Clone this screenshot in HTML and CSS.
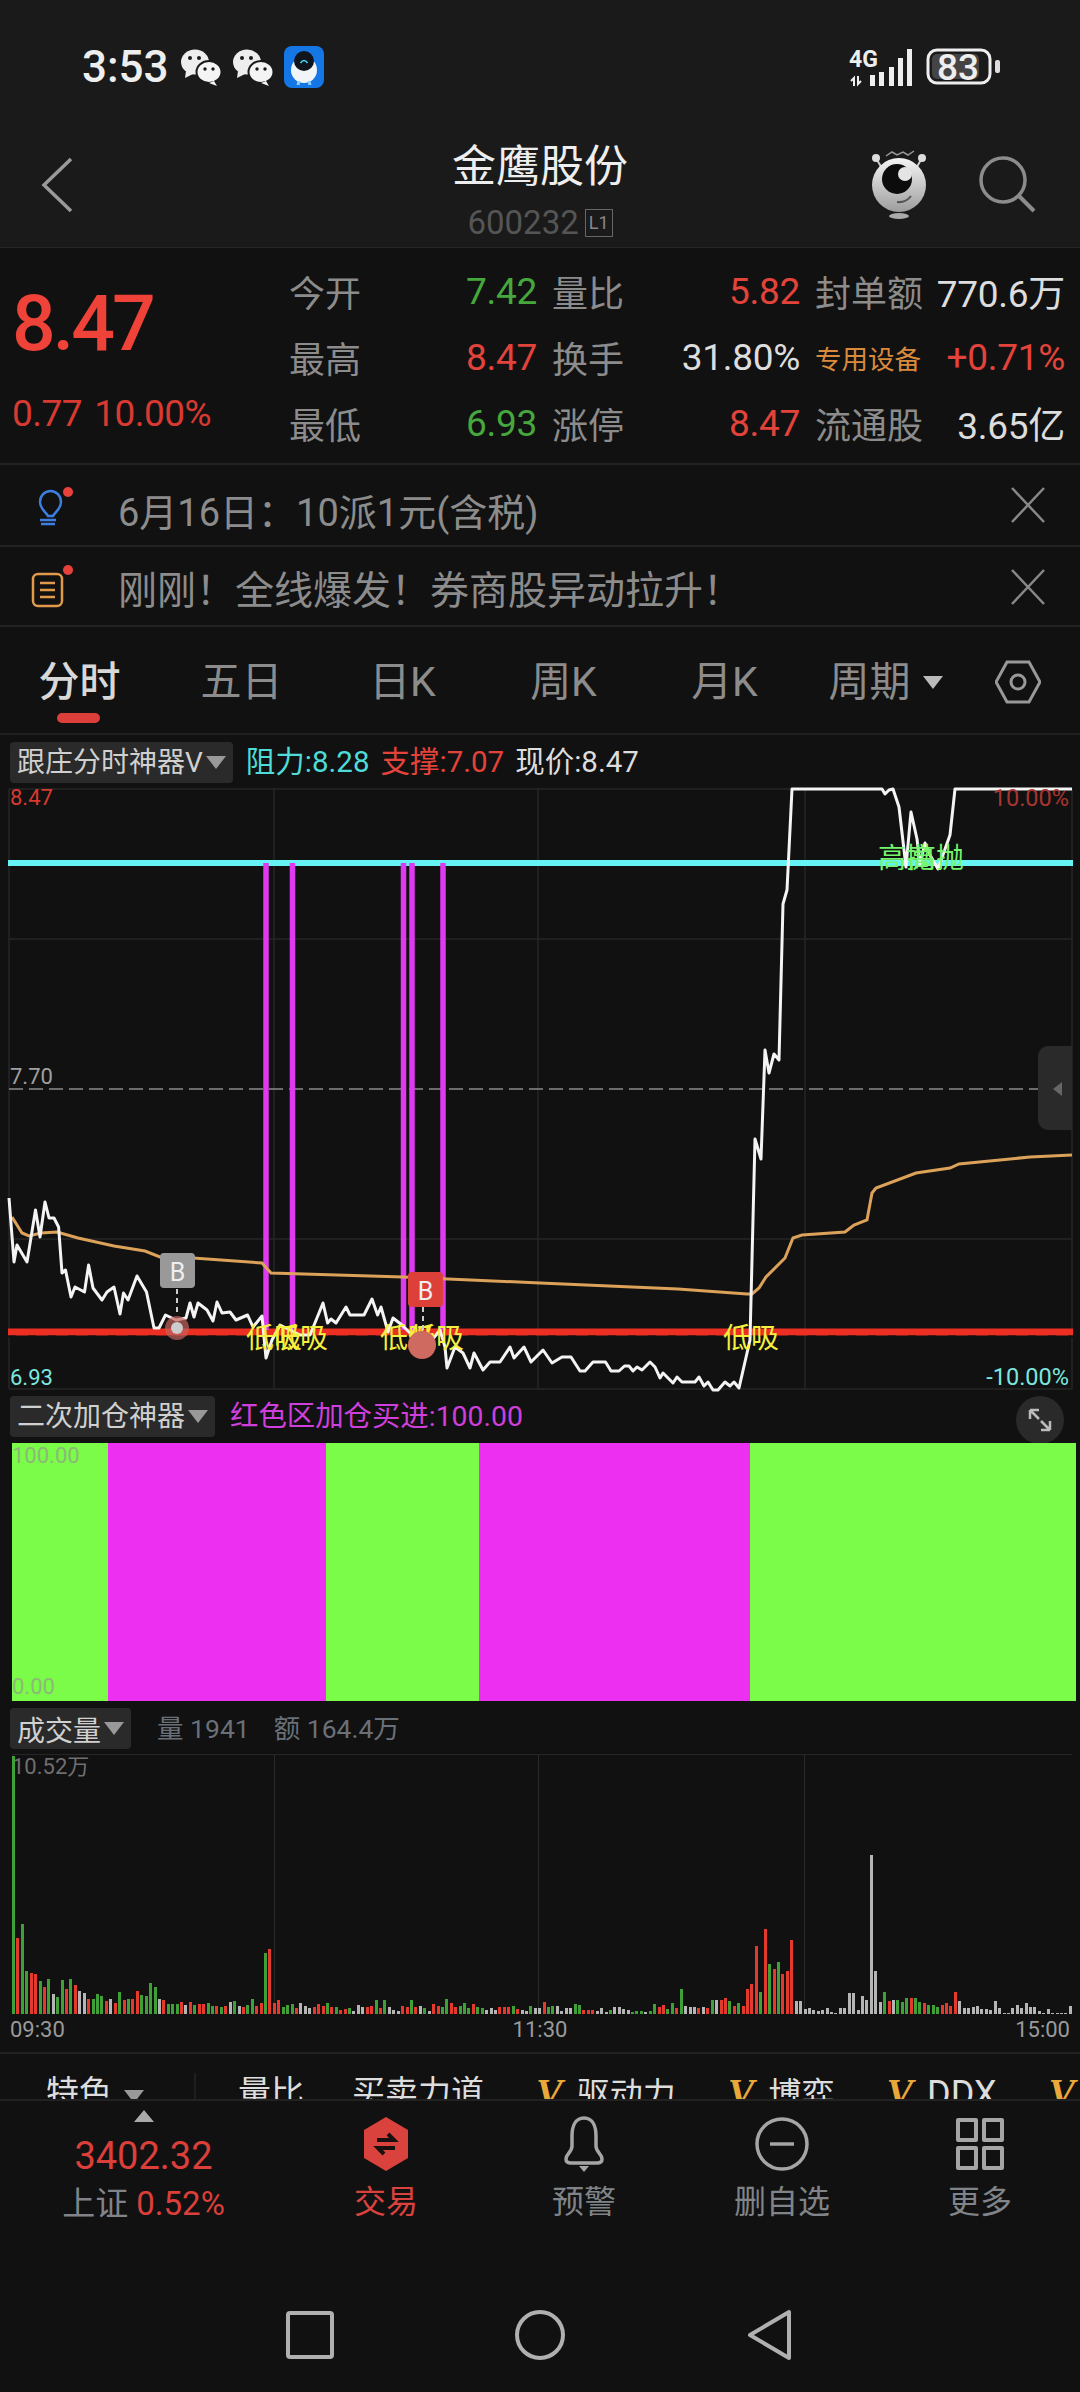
FILE: index.html
```html
<!DOCTYPE html>
<html lang="zh">
<head>
<meta charset="utf-8">
<title>金鹰股份</title>
<link rel="stylesheet" href="styles.css">
</head>
<body>
<div class="page">
  <header class="appbar">
    <div class="status">
      <span class="time">3:53</span>
      <svg class="wx" viewBox="0 0 42 38"><ellipse cx="15" cy="14" rx="14" ry="12.5" fill="#eee"/><path d="M6 23l-1 7 8-4z" fill="#eee"/><ellipse cx="29" cy="24" rx="12.5" ry="11" fill="#f4f4f4" stroke="#1a1a1a" stroke-width="2"/><path d="M34 33l3 5-8-3z" fill="#f4f4f4"/><circle cx="10" cy="10" r="2" fill="#1a1a1a"/><circle cx="19" cy="10" r="2" fill="#1a1a1a"/><circle cx="25" cy="21" r="1.7" fill="#1a1a1a"/><circle cx="33" cy="21" r="1.7" fill="#1a1a1a"/></svg>
      <svg class="wx" viewBox="0 0 42 38"><ellipse cx="15" cy="14" rx="14" ry="12.5" fill="#eee"/><path d="M6 23l-1 7 8-4z" fill="#eee"/><ellipse cx="29" cy="24" rx="12.5" ry="11" fill="#f4f4f4" stroke="#1a1a1a" stroke-width="2"/><path d="M34 33l3 5-8-3z" fill="#f4f4f4"/><circle cx="10" cy="10" r="2" fill="#1a1a1a"/><circle cx="19" cy="10" r="2" fill="#1a1a1a"/><circle cx="25" cy="21" r="1.7" fill="#1a1a1a"/><circle cx="33" cy="21" r="1.7" fill="#1a1a1a"/></svg>
      <svg class="appicon" viewBox="0 0 40 42"><rect width="40" height="42" rx="8" fill="#1577e6"/><ellipse cx="20" cy="24" rx="13" ry="13" fill="#f2f5f8"/><circle cx="20" cy="15" r="10" fill="#10141c"/><path d="M16.5 17q3.500-5 7 0" fill="none" stroke="#45d6f0" stroke-width="1.500"/><path d="M15 35l-1 4M25 35l1 4" stroke="#8fd0ff" stroke-width="3"/></svg>
      <svg class="sysright" viewBox="849 46 151 42">
        <text class="s4g" x="849" y="67">4G</text>
        <path d="M854 86v-8l-3 3M858 76v8l3-3" fill="none" stroke="#eee" stroke-width="2"/>
        <path d="M870 75h5v11h-5zM879 72h5v14h-5zM889 67h5v19h-5zM898 58h5v28h-5zM907 49h5v37h-5z" fill="#eee"/>
        <rect x="928" y="50" width="62" height="33" rx="9" fill="#1a1a1a" stroke="#eee" stroke-width="3"/>
        <rect x="932" y="54" width="47" height="25" rx="5" fill="#444"/>
        <rect x="995" y="60" width="5" height="13" rx="2" fill="#ddd"/>
        <text class="sbat" x="958" y="80">83</text>
      </svg>
    </div>
    <div class="navbar">
      <div class="navleft">
        <svg class="back" viewBox="0 0 34 58"><path d="M31 3L4 29l27 26" fill="none" stroke="#9a9a9a" stroke-width="3.500"/></svg>
      </div>
      <div class="titleblock">
        <div class="title">金鹰股份</div>
        <div class="code">600232<span class="l1">L1</span></div>
      </div>
      <div class="navright">
        <svg class="mascot" viewBox="870 146 60 74">
          <defs><linearGradient id="mg" x1="0" y1="0" x2="0" y2="1"><stop offset="0" stop-color="#f4f4f4"/><stop offset="1" stop-color="#9d9d9d"/></linearGradient></defs>
          <path d="M887 155l6-4 5 3 6-3 5 3 6-4" fill="none" stroke="#999" stroke-width="1.500"/>
          <path d="M877 157l8 14M923 157l-8 14" stroke="#ccc" stroke-width="2"/>
          <circle cx="877" cy="157" r="4" fill="#ddd"/><circle cx="923" cy="157" r="4" fill="#ddd"/>
          <circle cx="900" cy="184" r="27" fill="url(#mg)"/>
          <circle cx="898" cy="178" r="15" fill="#0c0c0c"/>
          <circle cx="906" cy="173" r="7" fill="#e4e4e4"/>
          <path d="M898 201q9 1 14-6" fill="none" stroke="#555" stroke-width="2"/>
          <ellipse cx="900" cy="215" rx="10" ry="3" fill="#aaa"/>
        </svg>
        <svg class="search" viewBox="0 0 58 58"><circle cx="25" cy="25" r="22" fill="none" stroke="#8c8c8c" stroke-width="3.500"/><path d="M41 41l15 15" stroke="#8c8c8c" stroke-width="4"/></svg>
      </div>
    </div>
  </header>

  <section class="quote">
    <div class="pricebox">
      <div class="price">8.47</div>
      <div class="change"><span>0.77</span><span>10.00%</span></div>
    </div>
    <div class="cell"><span class="lab">今开</span><span class="val g">7.42</span></div>
    <div class="cell"><span class="lab">量比</span><span class="val r">5.82</span></div>
    <div class="cell"><span class="lab">封单额</span><span class="val w">770.6万</span></div>
    <div class="cell"><span class="lab">最高</span><span class="val r">8.47</span></div>
    <div class="cell"><span class="lab">换手</span><span class="val w">31.80%</span></div>
    <div class="cell"><span class="lab sector">专用设备</span><span class="val r">+0.71%</span></div>
    <div class="cell"><span class="lab">最低</span><span class="val g">6.93</span></div>
    <div class="cell"><span class="lab">涨停</span><span class="val r">8.47</span></div>
    <div class="cell"><span class="lab">流通股</span><span class="val w">3.65亿</span></div>
  </section>

  <section class="notice first">
    <div class="nicon">
      <svg viewBox="0 0 50 44"><path d="M15 28c-2-4-8-7-8-14a10.500 11 0 0 1 21 0c0 7-6 10-8 14z" transform="translate(3 1)" fill="none" stroke="#3d7fe0" stroke-width="2.500"/><path d="M10 33h16M11 37h14" stroke="#3d7fe0" stroke-width="2.500"/><circle cx="38" cy="5" r="5" fill="#e8403a"/></svg>
    </div>
    <div class="ntext">6月16日：10派1元(含税)</div>
    <svg class="nclose" viewBox="0 0 36 36"><path d="M2 1l32 34M34 1L2 35" stroke="#888" stroke-width="2.500"/></svg>
  </section>
  <section class="notice">
    <div class="nicon">
      <svg viewBox="0 0 50 44"><rect x="3" y="9" width="29" height="32" rx="5" fill="none" stroke="#e09a4a" stroke-width="2.500"/><path d="M10 18h15M10 25h15M10 32h15" stroke="#e09a4a" stroke-width="2.500"/><circle cx="38" cy="5" r="5" fill="#e8403a"/></svg>
    </div>
    <div class="ntext">刚刚！全线爆发！券商股异动拉升！</div>
    <svg class="nclose" viewBox="0 0 36 36"><path d="M2 1l32 34M34 1L2 35" stroke="#888" stroke-width="2.500"/></svg>
  </section>

  <nav class="tabs">
    <div class="tab active">分时</div>
    <div class="tab">五日</div>
    <div class="tab">日K</div>
    <div class="tab">周K</div>
    <div class="tab">月K</div>
    <div class="tab">周期<i class="caret big"></i></div>
    <svg class="hex" viewBox="0 0 46 44"><path d="M12 2h22l11 20-11 20H12L1 22z" fill="none" stroke="#999" stroke-width="3"/><circle cx="23" cy="22" r="7" fill="none" stroke="#999" stroke-width="3"/></svg>
  </nav>

  <div class="legend">
    <div class="tag">跟庄分时神器V<i class="caret"></i></div>
    <span class="cy">阻力:8.28</span>
    <span class="rd">支撑:7.07</span>
    <span class="wh">现价:8.47</span>
  </div>

  <svg class="mainchart" viewBox="0 787 1080 606">
    <path class="grid" d="M9 789H1072M9 939H1072M9 1239H1072M9 1389H1072M9 789V1389M274 789V1389M538 789V1389M805 789V1389M1072 789V1389"/>
    <path class="midline" d="M9 1089H1072"/>
    <path class="cyanline" d="M8 863H1073"/>
    <path class="redline" d="M8 1332H1073"/>
    <path class="reddash" d="M8 1336.500H1073"/>
    <path class="mag" d="M266 863V1330M292.500 863V1330M403.500 863V1330M412 863V1330M443 863V1330"/>
    <path class="vwap" d="M12 1217L22 1233L29 1236L41 1233L57 1232L78 1238L114 1246L145 1251L160 1257L193 1258L262 1263L271 1273L403 1277L540 1283L678 1289L747 1294L752 1294L759 1288L766 1277L785 1258L793 1238L802 1235L845 1232L854 1225L867 1220L872 1193L876 1188L916 1173L950 1168L959 1164L1030 1157L1072 1155"/>
    <path class="priceline" d="M9 1198L14 1262L17 1245L27 1262L35.500 1210L40 1237L45 1202L49 1218L54 1218L58.600 1227L62 1273L65.500 1270L71 1297L75 1287L84.500 1292L88.600 1265L93 1288L102 1300L107 1292L114 1287L120 1314L123.500 1293L128 1300L137 1276L146.500 1292L154 1328L159 1328L165.500 1315L176 1320L186 1318L190 1303L194 1317L198 1303L207 1310L213 1321L217 1302L222 1313L230 1312L236 1320L247.600 1315L253 1327L262 1316L266 1358L272 1340L280 1325L290 1330L300 1335L310 1335L319 1313L323 1303L327.600 1323L331 1319L336 1323L346 1307L350 1315L364 1315L372 1299L377.600 1315L381 1307L388 1332L393 1318L402 1325L412 1335L428 1345L440 1330L445 1347L447 1368L455 1347L463 1353L470 1368L474 1353L483 1370L490 1362L500 1362L510 1347L514 1358L524 1347L531 1362L543 1350L552 1363L562 1357L571 1357L580 1371L585 1371L593 1362L605.500 1362L611 1371L619 1371L624.500 1366L629 1366L633 1371L637 1367L642 1370L650 1362L655 1367L660 1378L663 1373L673 1383L677 1377L682 1382L695 1382L699 1377L704 1386L708 1382L713 1390L718 1390L725 1382L730 1386L734 1382L739 1388L750 1340L755 1139L761 1159L765 1050L769 1073L774 1054L779 1060L783 904L787 890L792 789L882 789L885 794L889 790L893 789L899 807L906 867L911 812L917 839L920 865L925 843L930 855L938 869L950 835L955 789L1072 789"/>
    <text class="lb red" x="10" y="805">8.47</text>
    <text class="lb dimred end" x="1069" y="806">10.00%</text>
    <text class="lb grey" x="10" y="1084">7.70</text>
    <text class="lb cyan" x="10" y="1385">6.93</text>
    <text class="lb cyan end" x="1069" y="1385">-10.00%</text>
    <g class="sig">
      <text x="246" y="1348">低吸</text><text x="272" y="1348">低吸</text>
      <text x="380" y="1348">低吸</text><text x="408" y="1348">低吸</text>
      <text x="723" y="1348">低吸</text>
    </g>
    <g class="sell">
      <text x="878" y="868">高抛</text><text x="908" y="868">高抛</text>
    </g>
    <path class="sigdash" d="M177 1289V1316"/>
    <circle cx="177" cy="1328" r="12" fill="#c4625c" opacity=".7"/><circle cx="177" cy="1328" r="6" fill="#ccc"/>
    <rect x="160" y="1253" width="35" height="35" rx="4" fill="#999"/>
    <text class="bchar" x="177.500" y="1281">B</text>
    <path class="sigdash" d="M423 1307V1332"/>
    <circle cx="422" cy="1345" r="14" fill="#cf6a60"/>
    <rect x="408" y="1272" width="35" height="35" rx="4" fill="#dd4039"/>
    <text class="bchar" x="425.500" y="1300">B</text>
    <path d="M1072 1046h-24a10 10 0 0 0-10 10v64a10 10 0 0 0 10 10h24z" fill="#2a2a2a"/>
    <path d="M1053 1089l9-7v14z" fill="#666"/>
  </svg>

  <div class="indhead">
    <div class="tag">二次加仓神器<i class="caret"></i></div>
    <span class="pink">红色区加仓买进:100.00</span>
    <svg class="expand" viewBox="0 0 48 48"><circle cx="24" cy="24" r="24" fill="#2a2a2a"/><path d="M14 14h9M14 14v9M14 14l9 9M34 34h-9M34 34v-9M34 34l-9-9" fill="none" stroke="#bbb" stroke-width="2.500"/></svg>
  </div>

  <div class="band">
    <i class="lime"></i><i class="fuchsia"></i><i class="lime"></i><i class="fuchsia"></i><i class="lime"></i>
    <span class="bandtop">100.00</span>
    <span class="bandbot">0.00</span>
  </div>

  <div class="volhead">
    <div class="tag">成交量<i class="caret"></i></div>
    <span class="volinfo">量 1941</span>
    <span class="volinfo">额 164.4万</span>
  </div>

  <div class="volplot">
    <i class="vg v1"></i><i class="vg v2"></i><i class="vg v3"></i>
    <span class="volmax">10.52万</span>
    <div class="bars">
      <i class="g" style="height:258px"></i><i class="r" style="height:76px"></i><i class="g" style="height:90px"></i><i class="g" style="height:43px"></i><i class="r" style="height:41px"></i><i class="r" style="height:40px"></i><i class="g" style="height:33px"></i><i class="r" style="height:27px"></i><i class="g" style="height:35px"></i><i class="w" style="height:20px"></i><i class="g" style="height:17px"></i><i class="g" style="height:34px"></i><i class="r" style="height:25px"></i><i class="g" style="height:35px"></i><i class="r" style="height:29px"></i><i class="w" style="height:23px"></i><i class="w" style="height:21px"></i><i class="r" style="height:15px"></i><i class="g" style="height:15px"></i><i class="g" style="height:20px"></i>
      <i class="g" style="height:18px"></i><i class="r" style="height:13px"></i><i class="w" style="height:15px"></i><i class="r" style="height:11px"></i><i class="g" style="height:22px"></i><i class="r" style="height:14px"></i><i class="g" style="height:15px"></i><i class="r" style="height:15px"></i><i class="r" style="height:23px"></i><i class="g" style="height:19px"></i><i class="g" style="height:18px"></i><i class="g" style="height:31px"></i><i class="g" style="height:27px"></i><i class="w" style="height:15px"></i><i class="r" style="height:14px"></i><i class="g" style="height:10px"></i><i class="g" style="height:10px"></i><i class="g" style="height:10px"></i><i class="r" style="height:12px"></i><i class="w" style="height:9px"></i>
      <i class="r" style="height:12px"></i><i class="g" style="height:9px"></i><i class="r" style="height:10px"></i><i class="r" style="height:10px"></i><i class="g" style="height:11px"></i><i class="g" style="height:8px"></i><i class="r" style="height:8px"></i><i class="g" style="height:7px"></i><i class="r" style="height:8px"></i><i class="w" style="height:12px"></i><i class="g" style="height:13px"></i><i class="w" style="height:8px"></i><i class="r" style="height:7px"></i><i class="g" style="height:9px"></i><i class="g" style="height:15px"></i><i class="r" style="height:8px"></i><i class="r" style="height:11px"></i><i class="g" style="height:61px"></i><i class="r" style="height:65px"></i><i class="r" style="height:11px"></i>
      <i class="r" style="height:14px"></i><i class="g" style="height:7px"></i><i class="g" style="height:9px"></i><i class="g" style="height:10px"></i><i class="r" style="height:6px"></i><i class="w" style="height:11px"></i><i class="w" style="height:8px"></i><i class="w" style="height:6px"></i><i class="r" style="height:7px"></i><i class="r" style="height:10px"></i><i class="r" style="height:8px"></i><i class="g" style="height:11px"></i><i class="r" style="height:7px"></i><i class="g" style="height:7px"></i><i class="r" style="height:4px"></i><i class="r" style="height:5px"></i><i class="g" style="height:6px"></i><i class="w" style="height:3px"></i><i class="w" style="height:9px"></i><i class="w" style="height:7px"></i>
      <i class="r" style="height:7px"></i><i class="r" style="height:8px"></i><i class="g" style="height:14px"></i><i class="r" style="height:6px"></i><i class="g" style="height:14px"></i><i class="w" style="height:7px"></i><i class="w" style="height:4px"></i><i class="w" style="height:3px"></i><i class="r" style="height:8px"></i><i class="r" style="height:7px"></i><i class="g" style="height:14px"></i><i class="r" style="height:7px"></i><i class="w" style="height:8px"></i><i class="g" style="height:6px"></i><i class="w" style="height:3px"></i><i class="r" style="height:10px"></i><i class="r" style="height:8px"></i><i class="g" style="height:7px"></i><i class="g" style="height:15px"></i><i class="r" style="height:11px"></i>
      <i class="r" style="height:7px"></i><i class="g" style="height:8px"></i><i class="g" style="height:11px"></i><i class="g" style="height:6px"></i><i class="r" style="height:10px"></i><i class="g" style="height:7px"></i><i class="g" style="height:6px"></i><i class="w" style="height:4px"></i><i class="w" style="height:6px"></i><i class="w" style="height:4px"></i><i class="r" style="height:7px"></i><i class="r" style="height:7px"></i><i class="r" style="height:7px"></i><i class="g" style="height:8px"></i><i class="r" style="height:5px"></i><i class="w" style="height:4px"></i><i class="w" style="height:3px"></i><i class="g" style="height:8px"></i><i class="w" style="height:6px"></i><i class="w" style="height:6px"></i>
      <i class="r" style="height:12px"></i><i class="g" style="height:7px"></i><i class="g" style="height:8px"></i><i class="w" style="height:8px"></i><i class="w" style="height:3px"></i><i class="w" style="height:6px"></i><i class="w" style="height:6px"></i><i class="g" style="height:10px"></i><i class="g" style="height:9px"></i><i class="r" style="height:4px"></i><i class="r" style="height:4px"></i><i class="r" style="height:4px"></i><i class="w" style="height:3px"></i><i class="w" style="height:6px"></i><i class="w" style="height:2px"></i><i class="g" style="height:4px"></i><i class="w" style="height:7px"></i><i class="w" style="height:7px"></i><i class="w" style="height:5px"></i><i class="w" style="height:4px"></i>
      <i class="g" style="height:2px"></i><i class="g" style="height:3px"></i><i class="g" style="height:3px"></i><i class="w" style="height:2px"></i><i class="g" style="height:3px"></i><i class="g" style="height:10px"></i><i class="r" style="height:7px"></i><i class="r" style="height:9px"></i><i class="g" style="height:5px"></i><i class="g" style="height:11px"></i><i class="r" style="height:6px"></i><i class="g" style="height:25px"></i><i class="w" style="height:8px"></i><i class="w" style="height:7px"></i><i class="w" style="height:7px"></i><i class="r" style="height:6px"></i><i class="w" style="height:7px"></i><i class="r" style="height:6px"></i><i class="g" style="height:14px"></i><i class="w" style="height:14px"></i>
      <i class="r" style="height:14px"></i><i class="r" style="height:16px"></i><i class="g" style="height:13px"></i><i class="r" style="height:8px"></i><i class="g" style="height:11px"></i><i class="r" style="height:8px"></i><i class="r" style="height:25px"></i><i class="r" style="height:30px"></i><i class="r" style="height:68px"></i><i class="g" style="height:22px"></i><i class="r" style="height:85px"></i><i class="g" style="height:50px"></i><i class="r" style="height:45px"></i><i class="g" style="height:52px"></i><i class="r" style="height:40px"></i><i class="r" style="height:43px"></i><i class="r" style="height:74px"></i><i class="w" style="height:13px"></i><i class="w" style="height:13px"></i><i class="w" style="height:5px"></i>
      <i class="w" style="height:6px"></i><i class="w" style="height:4px"></i><i class="w" style="height:3px"></i><i class="w" style="height:4px"></i><i class="w" style="height:6px"></i><i class="w" style="height:2px"></i><i class="w" style="height:1px"></i><i class="w" style="height:6px"></i><i class="w" style="height:6px"></i><i class="w" style="height:21px"></i><i class="w" style="height:21px"></i><i class="w" style="height:4px"></i><i class="w" style="height:18px"></i><i class="w" style="height:14px"></i><i class="w" style="height:159px"></i><i class="w" style="height:43px"></i><i class="w" style="height:12px"></i><i class="g" style="height:22px"></i><i class="r" style="height:13px"></i><i class="w" style="height:14px"></i>
      <i class="g" style="height:14px"></i><i class="g" style="height:12px"></i><i class="g" style="height:16px"></i><i class="r" style="height:16px"></i><i class="g" style="height:16px"></i><i class="g" style="height:12px"></i><i class="r" style="height:11px"></i><i class="g" style="height:9px"></i><i class="g" style="height:9px"></i><i class="g" style="height:7px"></i><i class="r" style="height:9px"></i><i class="r" style="height:11px"></i><i class="r" style="height:8px"></i><i class="r" style="height:22px"></i><i class="w" style="height:13px"></i><i class="w" style="height:6px"></i><i class="w" style="height:6px"></i><i class="w" style="height:7px"></i><i class="w" style="height:8px"></i><i class="w" style="height:5px"></i>
      <i class="w" style="height:5px"></i><i class="w" style="height:4px"></i><i class="w" style="height:13px"></i><i class="w" style="height:6px"></i><i class="w" style="height:1px"></i><i class="w" style="height:1px"></i><i class="w" style="height:6px"></i><i class="w" style="height:9px"></i><i class="w" style="height:6px"></i><i class="w" style="height:11px"></i><i class="w" style="height:7px"></i><i class="w" style="height:7px"></i><i class="w" style="height:3px"></i><i class="w" style="height:1px"></i><i class="w" style="height:5px"></i><i class="w" style="height:1px"></i><i class="w" style="height:1px"></i><i class="w" style="height:1px"></i><i class="w" style="height:1px"></i><i class="w" style="height:8px"></i>
    </div>
  </div>

  <div class="axis"><span>09:30</span><span>11:30</span><span>15:00</span></div>

  <div class="scroller">
    <span class="item">特色</span><i class="caret scr"></i><i class="vsep"></i>
    <span class="item first">量比</span>
    <span class="item tight">买卖力道</span>
    <span class="item"><b class="vip">V</b>驱动力</span>
    <span class="item"><b class="vip">V</b>博弈</span>
    <span class="item"><b class="vip">V</b><span class="ddx">DDX</span></span>
    <span class="item last"><b class="vip">V</b>主力</span>
  </div>

  <footer class="bottomnav">
    <div class="index">
      <i class="uptri"></i>
      <div class="idxval">3402.32</div>
      <div class="idxchg"><span>上证</span> <em>0.52%</em></div>
    </div>
    <div class="bn active">
      <svg viewBox="0 0 52 56"><path d="M26 1l22 13v28L26 55 4 42V14z" fill="#d9423d"/><path d="M17 24h17l-6-6M35 32H18l6 6" fill="none" stroke="#1a1010" stroke-width="4"/></svg>
      <span>交易</span>
    </div>
    <div class="bn">
      <svg viewBox="0 0 52 56"><path d="M26 2c-9 0-12 9-12 18v10c0 6-6 8-6 13 0 3 2 4 5 4h26c3 0 5-1 5-4 0-5-6-7-6-13V20c0-9-3-18-12-18z" fill="none" stroke="#a5a5a5" stroke-width="3.500"/><path d="M21 50h10l-5 6z" fill="#a5a5a5"/></svg>
      <span>预警</span>
    </div>
    <div class="bn">
      <svg viewBox="0 0 56 56"><circle cx="28" cy="28" r="25" fill="none" stroke="#a5a5a5" stroke-width="3.500"/><path d="M16 28h24" stroke="#a5a5a5" stroke-width="3.500"/></svg>
      <span>删自选</span>
    </div>
    <div class="bn">
      <svg viewBox="0 0 56 56"><path d="M6 4h18v20H6zM32 4h18v20H32zM6 32h18v20H6zM32 32h18v20H32z" fill="none" stroke="#a5a5a5" stroke-width="4" stroke-linejoin="round"/></svg>
      <span>更多</span>
    </div>
  </footer>

  <div class="sysnav">
    <svg viewBox="0 0 60 60"><rect x="8" y="8" width="44" height="44" rx="2" fill="none" stroke="#b0b0b0" stroke-width="4"/></svg>
    <svg viewBox="0 0 60 60"><circle cx="30" cy="30" r="23" fill="none" stroke="#b0b0b0" stroke-width="4"/></svg>
    <svg viewBox="0 0 60 60"><path d="M49 7v46L10 30z" fill="none" stroke="#b0b0b0" stroke-width="4" stroke-linejoin="round"/></svg>
  </div>
</div>
</body>
</html>
```
FILE: styles.css
```css
* { box-sizing: border-box; }
html, body { margin: 0; padding: 0; background: #111; }
body { font-family: Roboto, "Noto Sans CJK SC", sans-serif; color: #ccc; }
.page { width: 1080px; height: 2392px; overflow: hidden; background: #111; display: flex; flex-direction: column; }
i { display: block; }

/* App bar */
.appbar { height: 248px; background: #1a1a1a; border-bottom: 1px solid #262626; flex: none; }
.status { height: 134px; display: flex; align-items: center; padding: 0 80px 0 82px; }
.time { font-size: 44px; font-weight: 500; color: #eee; width: 98px; }
.wx { width: 42px; height: 38px; margin-right: 10px; }
.appicon { width: 40px; height: 42px; margin-left: 0; }
.sysright { width: 151px; height: 42px; margin-left: auto; }
.s4g { font-size: 23px; font-weight: 700; fill: #eee; }
.sbat { font-size: 37px; font-weight: 500; fill: #eee; text-anchor: middle; }
.navbar { height: 113px; display: grid; grid-template-columns: 1fr auto 1fr; }
.navleft { padding: 22px 0 0 40px; }
.back { width: 34px; height: 58px; display: block; }
.titleblock { display: flex; flex-direction: column; align-items: center; padding-top: 5px; }
.title { font-size: 44px; line-height: 56px; color: #eee; }
.code { font-size: 33px; line-height: 44px; color: #555; margin-top: 6px; display: flex; align-items: center; }
.l1 { font-size: 18px; line-height: 26px; border: 1px solid #666; color: #888; padding: 0 3px; margin-left: 6px; }
.navright { display: flex; justify-content: flex-end; align-items: flex-start; padding: 13px 44px 0 0; gap: 49px; }
.mascot { width: 60px; height: 74px; }
.search { width: 58px; height: 58px; margin-top: 8px; }

/* Quote */
.quote { height: 217px; flex: none; display: grid; grid-template-columns: 274px 248px 248px 250px; grid-template-rows: repeat(3, 66px); column-gap: 15px; padding-top: 10px; border-bottom: 2px solid #222; }
.pricebox { grid-row: 1 / 4; padding: 26px 0 0 12px; }
.price { font-size: 77px; line-height: 80px; color: #ef4238; letter-spacing: -3px; font-weight: 500; }
.change { display: flex; gap: 12px; font-size: 37px; line-height: 40px; color: #d83a32; margin-top: 30px; letter-spacing: -.5px; }
.cell { display: flex; justify-content: space-between; align-items: center; }
.lab { font-size: 36px; color: #8c8c8c; }
.sector { font-size: 26.500px; color: #d98a3d; }
.val { font-size: 37px; letter-spacing: -.3px; }
.g { color: #46a83c; }
.r { color: #e2433a; }
.w { color: #ddd; }

/* Notices */
.notice { height: 80px; flex: none; display: flex; align-items: center; padding: 2px 34px 0 30px; border-bottom: 2px solid #222; }
.notice.first { height: 82px; padding-top: 8px; }
.notice.first .nclose { margin-top: -8px; }
.nicon { width: 88px; flex: none; }
.nicon svg { width: 50px; height: 44px; display: block; }
.ntext { flex: 1; font-size: 39px; color: #8c8c8c; white-space: nowrap; }
.notice.first .ntext { font-size: 38px; }
.nclose { width: 36px; height: 36px; }

/* Tabs */
.tabs { height: 108px; flex: none; display: grid; grid-template-columns: repeat(6, 161px) 114px; align-items: center; padding-top: 4px; border-bottom: 2px solid #1f1f1f; }
.tab { position: relative; font-size: 41px; color: #8c8c8c; display: flex; justify-content: center; align-items: center; line-height: 54px; }
.tab.active { color: #d8d8d8; font-weight: 500; margin-left: -2px; }
.tab.active::after { content: ""; position: absolute; left: 59px; top: 58px; width: 43px; height: 10px; border-radius: 5px; background: #dc3f3a; }
.hex { width: 46px; height: 44px; justify-self: center; margin-left: -10px; }
.caret { width: 0; height: 0; border-left: 10px solid transparent; border-right: 10px solid transparent; border-top: 13px solid #999; margin-left: 3px; }
.caret.big { margin-left: 12px; border-top-color: #bbb; }

/* Legend */
.legend { height: 52px; flex: none; padding: 7px 0 0 10px; display: flex; align-items: flex-start; gap: 11px; font-size: 29.500px; line-height: 40px; }
.tag { height: 41px; background: #2a2a2a; border-radius: 4px; display: flex; align-items: center; padding: 0 7px; font-size: 28px; color: #d0d0d0; white-space: nowrap; margin-right: 2px; }
.cy { color: #4fdcd8; }
.rd { color: #e2433a; }
.wh { color: #ddd; }

/* Main chart */
.mainchart { width: 1080px; height: 606px; display: block; flex: none; }
.grid { fill: none; stroke: #262626; stroke-width: 1.500; }
.midline { fill: none; stroke: #8a8a8a; stroke-width: 1.500; stroke-dasharray: 14 6; }
.cyanline { stroke: #66f3f5; stroke-width: 6; }
.redline { stroke: #ec2f22; stroke-width: 7; }
.reddash { stroke: #111; stroke-width: 2; stroke-dasharray: 8 12; }
.mag { fill: none; stroke: #df3af0; stroke-width: 5.500; }
.vwap { fill: none; stroke: #dca25a; stroke-width: 3; }
.priceline { fill: none; stroke: #f4f4f4; stroke-width: 3; stroke-linejoin: round; }
.lb { font-size: 22px; }
.lb.end { font-size: 23.500px; text-anchor: end; }
.red { fill: #d8392f; }
.dimred { fill: #a83530; }
.grey { fill: #a0a0a0; }
.cyan { fill: #7ce6df; }
.sig text { font-size: 28px; fill: #f5f03f; font-family: "Noto Sans CJK SC", sans-serif; font-weight: 400; }
.sell text { font-size: 28px; fill: #74f56c; font-family: "Noto Sans CJK SC", sans-serif; font-weight: 400; }
.sigdash { stroke: #ccc; stroke-width: 2; stroke-dasharray: 5 4; fill: none; }
.bchar { font-size: 25px; fill: #eee; text-anchor: middle; }

/* Indicator 2 */
.indhead { height: 50px; flex: none; padding: 3px 16px 0 10px; display: flex; align-items: flex-start; gap: 13px; font-size: 28.400px; line-height: 41px; }
.pink { color: #cf3fdc; flex: 1; }
.expand { width: 48px; height: 48px; }
.band { position: relative; height: 258px; flex: none; margin: 0 4px 0 12px; display: grid; grid-template-columns: 96px 218px 153px 271px 1fr; }
.lime { background: #7afc48; }
.fuchsia { background: #ec2ff0; }
.bandtop, .bandbot { position: absolute; left: 0; font-size: 22px; line-height: 26px; color: #8cb878; }
.bandtop { top: 0; }
.bandbot { bottom: 1px; }

/* Volume */
.volhead { height: 53px; flex: none; padding: 7px 0 0 10px; display: flex; align-items: flex-start; gap: 24px; }
.volinfo { font-size: 26.500px; line-height: 41px; color: #6a7078; }
.volplot { position: relative; height: 260px; flex: none; margin: 0 8px 0 12px; border-top: 1px solid #262626; }
.vg { position: absolute; top: 0; bottom: 0; width: 1px; background: #2a2a2a; }
.v1 { left: 262px; }
.v2 { left: 526px; }
.v3 { left: 792px; }
.volmax { position: absolute; left: 0; top: 0; font-size: 22px; line-height: 24px; color: #6f6f6f; }
.bars { position: absolute; left: 0; right: 0; bottom: 0; display: flex; justify-content: space-between; align-items: flex-end; height: 259px; }
.bars i { width: 3px; }
.bars .g { background: #3fa037; }
.bars .r { background: #e6392e; }
.bars .w { background: #b5b5b5; }
.axis { height: 38px; flex: none; padding: 1px 10px 0 10px; display: flex; justify-content: space-between; font-size: 22px; line-height: 30px; color: #9a9a9a; }

/* Scroller */
.scroller { height: 49px; flex: none; display: flex; padding: 19px 0 0 46px; overflow: hidden; border-top: 2px solid #222; border-bottom: 2px solid #222; font-size: 33px; line-height: 40px; color: #ddd; white-space: nowrap; gap: 52px; }
.item { flex: none; display: block; }
.item.first { margin-left: -10px; margin-right: -4px; }
.item.tight { margin-right: 0; }
.ddx { font-size: 36px; }
.caret.scr { flex: none; margin: 17px 0 0 -40px; }
.vsep { flex: none; width: 2px; height: 40px; background: #1f1f1f; margin-left: -2px; }
.vip { font-family: "Liberation Serif", serif; font-style: italic; font-weight: 700; font-size: 40px; color: #e8a93a; margin-right: 14px; }

/* Bottom nav */
.bottomnav { height: 169px; flex: none; display: grid; grid-template-columns: 287px repeat(4, 198px); }
.index { display: flex; flex-direction: column; align-items: center; padding-top: 9px; }
.uptri { width: 0; height: 0; border-left: 10px solid transparent; border-right: 10px solid transparent; border-bottom: 12px solid #aaa; margin-bottom: 10px; }
.idxval { font-size: 38px; line-height: 48px; color: #dc3f3a; }
.idxchg { font-size: 33px; line-height: 48px; color: #808488; }
.idxchg em { font-style: normal; color: #dc3f3a; }
.bn { display: flex; flex-direction: column; align-items: center; padding-top: 15px; font-size: 32px; line-height: 44px; color: #808488; }
.bn svg { width: 56px; height: 56px; display: block; margin-bottom: 8px; }
.bn.active { color: #d9423d; }

/* System nav */
.sysnav { flex: 1; display: flex; justify-content: center; align-items: flex-start; gap: 170px; padding-top: 35px; }
.sysnav svg { width: 60px; height: 60px; }
```
